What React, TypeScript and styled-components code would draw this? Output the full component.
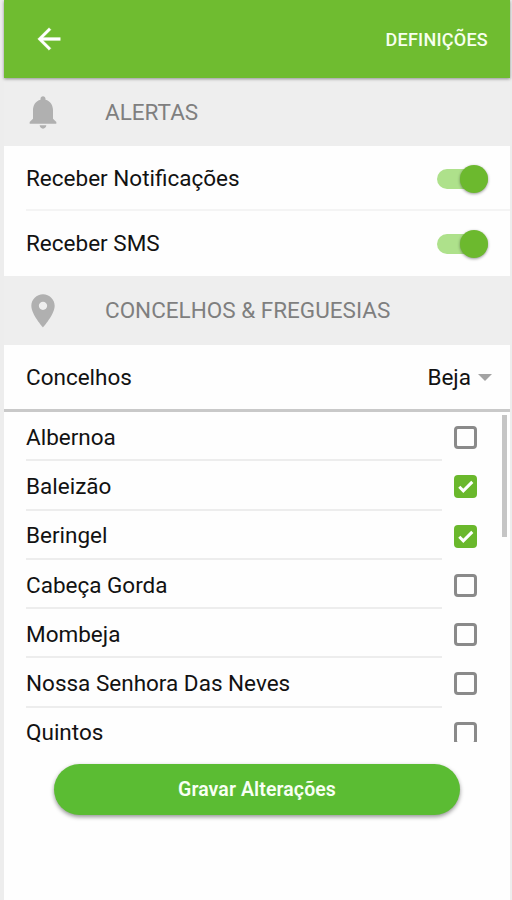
import React, { useState } from "react";
import styled, { createGlobalStyle } from "styled-components";

const GlobalStyle = createGlobalStyle`
  * { box-sizing: border-box; }
  body { margin: 0; background: #eeeeee; }
`;

const Screen = styled.div`
  width: 512px;
  height: 900px;
  padding: 0 2px 0 4px;
  overflow: hidden;
  background: #ededed;
  font-family: Roboto, "Noto Sans", sans-serif;
  color: #121212;
`;

const Page = styled.main`
  height: 100%;
  display: flex;
  flex-direction: column;
  background: #fefefe;
`;

const AppBar = styled.header`
  height: 78px;
  flex: none;
  position: relative;
  display: flex;
  align-items: center;
  justify-content: space-between;
  padding: 0 22px 0 28px;
  background: #6fbc30;
  box-shadow: 0 1px 3px rgba(0, 0, 0, 0.4);
`;

const BackButton = styled.button`
  display: flex;
  padding: 0;
  border: 0;
  background: none;
`;

const Title = styled.h1`
  margin: 1px 0 0;
  font-size: 18px;
  font-weight: 500;
  letter-spacing: 0.25px;
  color: #f7ffef;
`;

const SectionHeader = styled.div<{ $height: number }>`
  height: ${(p) => p.$height}px;
  flex: none;
  display: flex;
  align-items: center;
  gap: 42px;
  padding: 0 0 1px 19px;
  background: #eeeeee;
  color: #7f7f7f;
  font-size: 22.5px;
`;

const Glyph = styled.svg<{ $size: number }>`
  width: ${(p) => p.$size}px;
  height: ${(p) => p.$size}px;
  flex: none;
  display: block;
`;

const SettingRow = styled.div<{ $height: number; $divided?: boolean }>`
  height: ${(p) => p.$height}px;
  flex: none;
  display: flex;
  align-items: center;
  justify-content: space-between;
  margin-left: 22px;
  padding-right: 21px;
  padding-bottom: ${(p) => (p.$divided ? 0 : 1)}px;
  border-bottom: ${(p) => (p.$divided ? "2px solid #f4f4f4" : "0")};
  font-size: 22.5px;
`;

const Label = styled.span`
  line-height: 26px;
  white-space: nowrap;
`;

const Track = styled.button<{ $on: boolean }>`
  width: 51px;
  height: 20px;
  padding: 0;
  border: 0;
  border-radius: 10px;
  display: flex;
  align-items: center;
  justify-content: ${(p) => (p.$on ? "flex-end" : "flex-start")};
  background: ${(p) => (p.$on ? "#aee18b" : "#bdbdbd")};
  margin: 2px 1px 0 0;
`;

const Thumb = styled.span<{ $on: boolean }>`
  width: 28px;
  height: 28px;
  flex: none;
  border-radius: 50%;
  background: ${(p) => (p.$on ? "#6cb92e" : "#fafafa")};
  box-shadow: 0 1px 3px rgba(0, 0, 0, 0.4);
`;

const Picker = styled.div`
  display: flex;
  align-items: center;
  gap: 7px;
  margin-right: -3px;
`;

const Caret = styled.span`
  margin-top: 1px;
  border: 7px solid transparent;
  border-top-color: #a3a3a3;
  border-bottom: 0;
`;

const ListBox = styled.div`
  height: 333px;
  flex: none;
  display: flex;
  justify-content: space-between;
  border-top: 3px solid #c9c9c9;
  overflow: hidden;
`;

const ParishList = styled.ul`
  width: 452px;
  margin: 0;
  padding: 0 0 0 22px;
  list-style: none;
  flex: 1;
`;

const Parish = styled.li`
  height: 49.3px;
  display: flex;
  gap: 12px;
`;

const ParishName = styled.div`
  width: 416px;
  display: flex;
  align-items: center;
  padding-top: 2px;
  border-bottom: 2px solid #ededed;
  font-size: 22.5px;

  ${Label} {
    line-height: 20px;
  }
`;

const Box = styled.button<{ $checked: boolean }>`
  width: 23px;
  height: 23px;
  margin-top: 14px;
  padding: 0;
  display: flex;
  align-items: center;
  justify-content: center;
  border: ${(p) => (p.$checked ? "0" : "3px solid #8a8a8a")};
  border-radius: 4px;
  background: ${(p) => (p.$checked ? "#6ab82c" : "transparent")};
`;

const ScrollThumb = styled.div`
  width: 5px;
  height: 122px;
  margin: 3px 3px 0 0;
  background: #c5c5c5;
`;

const SaveButton = styled.button`
  width: 406px;
  height: 51px;
  flex: none;
  margin: 22px 0 0 50px;
  padding: 0 0 1px;
  border: 0;
  border-radius: 26px;
  background: #5bbc33;
  box-shadow: 0 2px 4px rgba(0, 0, 0, 0.42);
  color: #f8fff4;
  font-family: inherit;
  font-size: 19.5px;
  font-weight: 600;
  letter-spacing: 0.1px;
`;

function Toggle({ name }: { name: string }) {
  const [on, setOn] = useState(true);
  return (
    <Track $on={on} role="switch" aria-checked={on} aria-label={name} onClick={() => setOn(!on)}>
      <Thumb $on={on} />
    </Track>
  );
}

const parishes = [
  "Albernoa",
  "Baleizão",
  "Beringel",
  "Cabeça Gorda",
  "Mombeja",
  "Nossa Senhora Das Neves",
  "Quintos",
];

export default function App() {
  const [selected, setSelected] = useState(["Baleizão", "Beringel"]);
  const flip = (name: string) =>
    setSelected((s) => (s.includes(name) ? s.filter((n) => n !== name) : [...s, name]));

  return (
    <Screen>
      <GlobalStyle />
      <Page>
        <AppBar>
          <BackButton aria-label="Voltar">
            <Glyph $size={34} viewBox="0 0 24 24" fill="#fff" stroke="#fff" strokeWidth={0.2}>
              <path d="M20 11H7.83l5.59-5.59L12 4l-8 8 8 8 1.41-1.41L7.83 13H20v-2z" />
            </Glyph>
          </BackButton>
          <Title>DEFINIÇÕES</Title>
        </AppBar>
        <SectionHeader $height={68}>
          <Glyph $size={40} viewBox="0 0 24 24" fill="#b0b0b0">
            <path d="M12 22c1.1 0 2-.9 2-2h-4c0 1.1.89 2 2 2zm6-6v-5c0-3.07-1.64-5.64-4.5-6.32V4c0-.83-.67-1.5-1.5-1.5s-1.5.67-1.5 1.5v.68C7.63 5.36 6 7.92 6 11v5l-2 2v1h16v-1l-2-2z" />
          </Glyph>
          <Label>ALERTAS</Label>
        </SectionHeader>
        <SettingRow $height={65} $divided>
          <Label>Receber Notificações</Label>
          <Toggle name="Receber Notificações" />
        </SettingRow>
        <SettingRow $height={65}>
          <Label>Receber SMS</Label>
          <Toggle name="Receber SMS" />
        </SettingRow>
        <SectionHeader $height={69}>
          <Glyph $size={40} viewBox="0 -0.5 24 24" fill="#b0b0b0">
            <path d="M12 2C8.13 2 5 5.13 5 9c0 5.25 7 13 7 13s7-7.75 7-13c0-3.87-3.13-7-7-7zm0 9.5c-1.38 0-2.5-1.12-2.5-2.5s1.12-2.5 2.5-2.5 2.5 1.12 2.5 2.5-1.12 2.5-2.5 2.5z" />
          </Glyph>
          <Label>CONCELHOS &amp; FREGUESIAS</Label>
        </SectionHeader>
        <SettingRow $height={64}>
          <Label>Concelhos</Label>
          <Picker>
            <Label>Beja</Label>
            <Caret />
          </Picker>
        </SettingRow>
        <ListBox>
          <ParishList>
            {parishes.map((name) => {
              const checked = selected.includes(name);
              return (
                <Parish key={name}>
                  <ParishName>
                    <Label>{name}</Label>
                  </ParishName>
                  <Box
                    $checked={checked}
                    role="checkbox"
                    aria-checked={checked}
                    aria-label={name}
                    onClick={() => flip(name)}
                  >
                    {checked && (
                      <Glyph $size={23} viewBox="0 0 23 23" fill="none" stroke="#fff" strokeWidth={3}>
                        <path d="M5.3 11.8l4 4 9-8.9" />
                      </Glyph>
                    )}
                  </Box>
                </Parish>
              );
            })}
          </ParishList>
          <ScrollThumb />
        </ListBox>
        <SaveButton>Gravar Alterações</SaveButton>
      </Page>
    </Screen>
  );
}
